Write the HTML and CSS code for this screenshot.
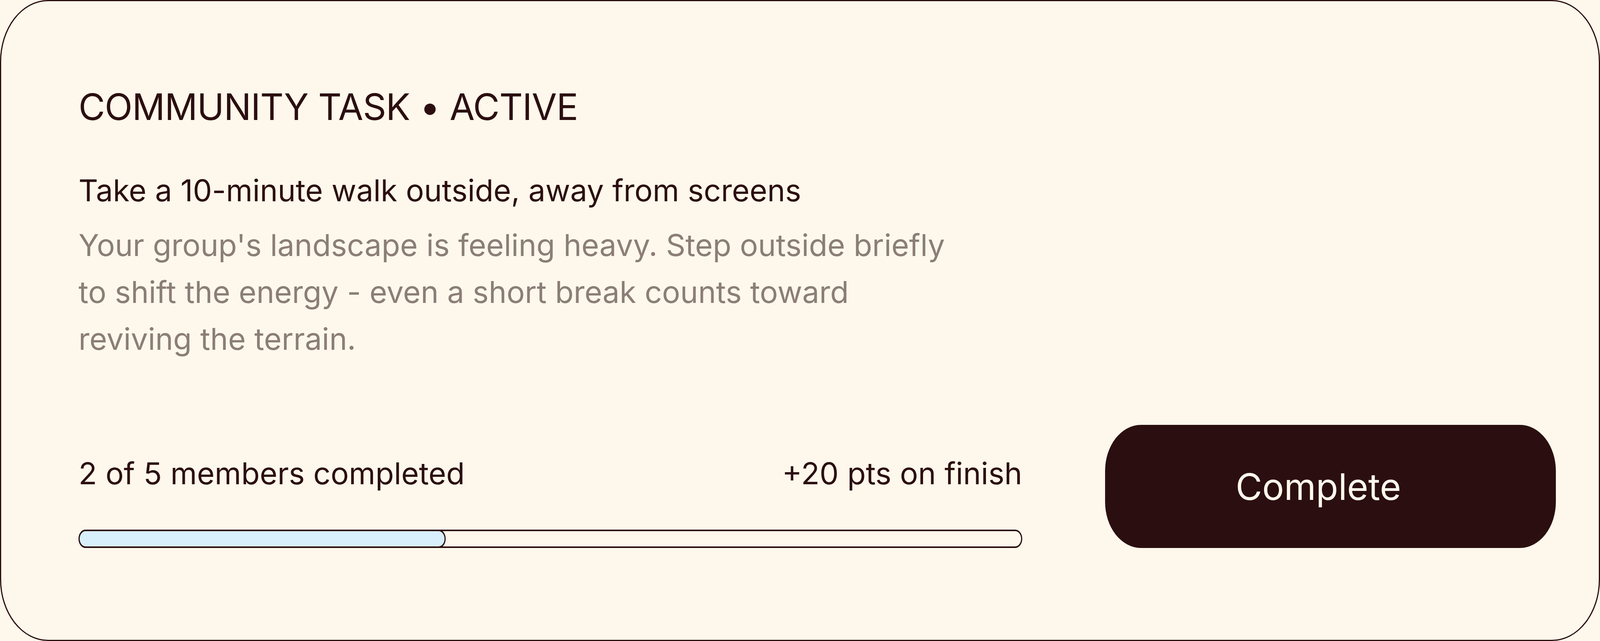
FILE: index.html
```html
<!DOCTYPE html>
<html lang="en">
<head>
<meta charset="utf-8">
<title>Community Task</title>
<link rel="stylesheet" href="styles.css">
</head>
<body>
<section class="task-card">
  <h2 class="task-eyebrow">COMMUNITY TASK • ACTIVE</h2>
  <h3 class="task-title">Take a 10-minute walk outside, away from screens</h3>
  <p class="task-desc">Your group's landscape is feeling heavy. Step outside briefly to shift the energy - even a short break counts toward reviving the terrain.</p>
  <div class="task-footer">
    <div class="progress-col">
      <div class="progress-labels">
        <span>2 of 5 members completed</span>
        <span>+20 pts on finish</span>
      </div>
      <div class="progress-track">
        <div class="progress-fill" style="width: 39%"></div>
      </div>
    </div>
    <button class="complete-btn" type="button">Complete</button>
  </div>
</section>
</body>
</html>
```

FILE: styles.css
```css
html, body {
  margin: 0;
  padding: 0;
  background: #fef8ec;
}

body {
  font-family: "Inter", "Noto Sans", "Liberation Sans", sans-serif;
  color: #2b0f10;
}

.task-card {
  box-sizing: border-box;
  width: 100%;
  min-height: 100vh;
  background: #fef8ec;
  border: 3px solid #2b0f10;
  border-radius: 123px / 158px;
  padding: 198px 110px 235px 198px;
  display: flex;
  flex-direction: column;
}

.task-eyebrow {
  margin: 0;
  font-size: 93.2px;
  line-height: 144px;
  letter-spacing: -0.011em;
  font-weight: 400;
}

.task-title {
  margin: 82px 0 0;
  font-size: 77.6px;
  line-height: 120px;
  font-weight: 400;
}

.task-desc {
  margin: 20px 0 0;
  max-width: 2240px;
  font-size: 77.6px;
  line-height: 120px;
  color: #8b7e77;
}

.task-footer {
  margin-top: 160px;
  display: flex;
  align-items: flex-end;
  gap: 212px;
}

.progress-col {
  flex: 1;
  display: flex;
  flex-direction: column;
}

.progress-labels {
  display: flex;
  justify-content: space-between;
  font-size: 77.6px;
  line-height: 120px;
  margin-bottom: 84px;
}

.progress-track {
  box-sizing: border-box;
  height: 47px;
  border-style: solid;
  border-color: #2b0f10;
  border-width: 4px 3px;
  border-radius: 18px / 23.5px;
  background: #fef8ec;
  display: flex;
}

.progress-fill {
  box-sizing: border-box;
  margin: -4px 0 -4px -3px;
  border-style: solid;
  border-color: #2b0f10;
  border-width: 4px 3px;
  border-radius: 18px / 23.5px;
  background: #d8effc;
}

.complete-btn {
  box-sizing: border-box;
  width: 1154px;
  height: 315px;
  flex: none;
  border: 0;
  border-radius: 92px / 118px;
  background: #2b0f10;
  color: #fef8ec;
  font-family: "Inter", "Noto Sans", "Liberation Sans", sans-serif;
  font-size: 93.2px;
  font-weight: 400;
  padding: 0 62px 0 0;
}
```
